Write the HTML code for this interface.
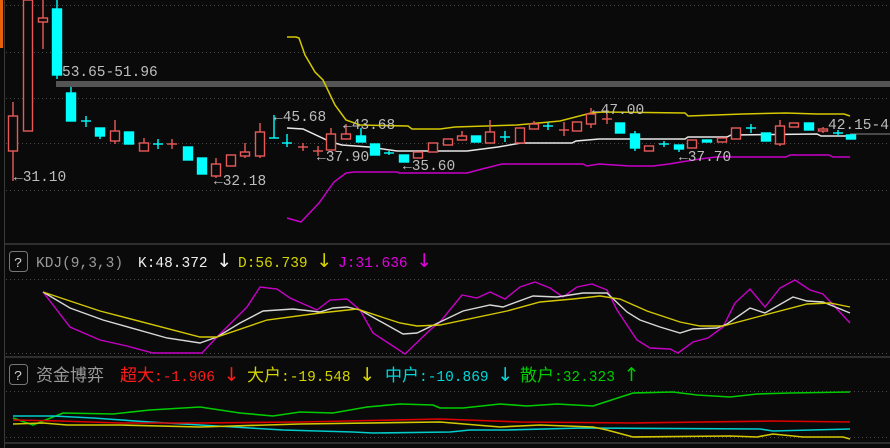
<!DOCTYPE html>
<html><head><meta charset="utf-8"><style>
html,body{margin:0;padding:0;background:#0a0a0a;}
svg{display:block}
text{font-family:"Liberation Mono","WenQuanYi Zen Hei",monospace;}
</style></head><body>
<svg width="890" height="448" viewBox="0 0 890 448" xmlns="http://www.w3.org/2000/svg">
<rect width="890" height="448" fill="#0a0a0a"/>
<rect x="0" y="0" width="3" height="48" fill="#e8600c"/>
<line x1="4.5" y1="0" x2="4.5" y2="448" stroke="#3a3a3a" stroke-width="1"/>
<g stroke="#4a4a4a" stroke-width="1" stroke-dasharray="1,3">
<line x1="6" y1="5.5" x2="890" y2="5.5"/><line x1="6" y1="52.5" x2="890" y2="52.5"/>
<line x1="6" y1="98.5" x2="890" y2="98.5"/><line x1="6" y1="143.5" x2="890" y2="143.5"/>
<line x1="6" y1="190.5" x2="890" y2="190.5"/>
<line x1="6" y1="279.5" x2="890" y2="279.5"/><line x1="6" y1="353.5" x2="890" y2="353.5"/>
<line x1="6" y1="391.5" x2="890" y2="391.5"/><line x1="6" y1="437.5" x2="890" y2="437.5"/>
</g>
<g stroke="#2e2e2e" stroke-width="2">
<line x1="5" y1="244" x2="890" y2="244"/><line x1="5" y1="357" x2="890" y2="357"/><line x1="5" y1="443" x2="890" y2="443"/>
</g>
<rect x="56" y="81" width="834" height="6" fill="#555"/>
<polyline fill="none" stroke="#d4c800" stroke-width="1.5" points="287,37 296,37 299,38 305,55 315,72 323,80 335,105 346,120 360,125 408,126 412,129 440,129 455,127 517,125 560,121 591,113 603,112 685,113 688,116 743,114 786,113 817,114 844,114 850,116"/>
<polyline fill="none" stroke="#e8e8e8" stroke-width="1.5" points="287,128 303,129 331,142 342,145 369,147 397,151 467,151 498,147 521,143 572,143 576,141 599,139 685,139 688,137 727,137 731,135 817,134 821,136 850,136"/>
<line x1="850" y1="134" x2="890" y2="134" stroke="#888" stroke-width="1"/>
<polyline fill="none" stroke="#c800c8" stroke-width="1.5" points="287,218 301,222 319,203 334,182 346,173 354,172 397,172 399,173 467,173 482,169 502,164 583,164 587,166 599,164 630,166 653,166 669,164 681,162 700,159 716,157 786,157 790,155 829,155 833,157 850,157"/>
<g stroke="#e85a5a" stroke-width="1.4" fill="#0a0a0a">
<line x1="13" y1="102" x2="13" y2="181"/><rect x="8.5" y="116" width="9" height="35"/>
<rect x="23.5" y="0" width="9" height="131"/>
<line x1="43" y1="0" x2="43" y2="49"/><rect x="38.5" y="18" width="9" height="4"/>
<line x1="115" y1="120" x2="115" y2="144"/><rect x="110.5" y="131" width="9" height="10"/>
<line x1="144" y1="138" x2="144" y2="151"/><rect x="139.5" y="143" width="9" height="8"/>
<line x1="172" y1="139" x2="172" y2="149"/><line x1="167" y1="144" x2="177" y2="144"/>
<line x1="216" y1="158" x2="216" y2="178"/><rect x="211.5" y="164" width="9" height="12"/>
<rect x="226.5" y="155" width="9" height="11"/>
<line x1="245" y1="143" x2="245" y2="158"/><rect x="240.5" y="152" width="9" height="4"/>
<line x1="260" y1="123" x2="260" y2="158"/><rect x="255.5" y="132" width="9" height="24"/>
<line x1="303" y1="143" x2="303" y2="151"/><line x1="298" y1="147" x2="308" y2="147"/>
<line x1="318" y1="146" x2="318" y2="156"/><line x1="313" y1="151" x2="323" y2="151"/>
<line x1="331" y1="128" x2="331" y2="150"/><rect x="326.5" y="134" width="9" height="16"/>
<line x1="346" y1="124" x2="346" y2="139"/><rect x="341.5" y="134" width="9" height="5"/>
<rect x="413.5" y="152" width="9" height="6"/>
<rect x="428.5" y="143" width="9" height="9"/>
<rect x="443.5" y="139" width="9" height="6"/>
<line x1="462" y1="131" x2="462" y2="140"/><rect x="457.5" y="136" width="9" height="4"/>
<line x1="490" y1="120" x2="490" y2="143"/><rect x="485.5" y="132" width="9" height="11"/>
<rect x="515.5" y="128" width="9" height="15"/>
<line x1="534" y1="121" x2="534" y2="129"/><rect x="529.5" y="124" width="9" height="5"/>
<line x1="564" y1="122" x2="564" y2="136"/><line x1="559" y1="130" x2="569" y2="130"/>
<rect x="572.5" y="122" width="9" height="9"/>
<line x1="591" y1="108" x2="591" y2="128"/><rect x="586.5" y="114" width="9" height="10"/>
<line x1="607" y1="114" x2="607" y2="124"/><line x1="602" y1="119" x2="612" y2="119"/>
<rect x="644.5" y="146" width="9" height="5"/>
<rect x="687.5" y="140" width="9" height="8"/>
<rect x="717.5" y="138" width="9" height="4"/>
<rect x="731.5" y="128" width="9" height="11"/>
<line x1="780" y1="120" x2="780" y2="146"/><rect x="775.5" y="126" width="9" height="18"/>
<rect x="789.5" y="123" width="9" height="4"/>
<line x1="823" y1="127" x2="823" y2="133"/><rect x="818.5" y="129" width="9" height="2"/>
</g>
<g stroke="#00ffff" stroke-width="1.4" fill="#00ffff">
<line x1="57" y1="0" x2="57" y2="79"/><rect x="52.5" y="9" width="9" height="66"/>
<line x1="71" y1="87" x2="71" y2="121"/><rect x="66.5" y="93" width="9" height="28"/>
<line x1="86" y1="116" x2="86" y2="127"/><line x1="81" y1="121" x2="91" y2="121"/>
<line x1="100" y1="128" x2="100" y2="139"/><rect x="95.5" y="128" width="9" height="8"/>
<rect x="124.5" y="132" width="9" height="12"/>
<line x1="158" y1="139" x2="158" y2="149"/><line x1="153" y1="144" x2="163" y2="144"/>
<rect x="183.5" y="147" width="9" height="13"/>
<rect x="197.5" y="158" width="9" height="16"/>
<line x1="274" y1="115" x2="274" y2="138"/><line x1="269" y1="138" x2="279" y2="138"/>
<line x1="287" y1="134" x2="287" y2="147"/><line x1="282" y1="143" x2="292" y2="143"/>
<line x1="361" y1="128" x2="361" y2="142"/><rect x="356.5" y="136" width="9" height="6"/>
<rect x="370.5" y="144" width="9" height="11"/>
<line x1="389" y1="151" x2="389" y2="155"/><line x1="384" y1="153" x2="394" y2="153"/>
<rect x="399.5" y="155" width="9" height="7"/>
<rect x="471.5" y="136" width="9" height="6"/>
<line x1="505" y1="131" x2="505" y2="142"/><line x1="500" y1="137" x2="510" y2="137"/>
<line x1="548" y1="122" x2="548" y2="130"/><line x1="543" y1="126" x2="553" y2="126"/>
<rect x="615.5" y="123" width="9" height="10"/>
<line x1="635" y1="131" x2="635" y2="151"/><rect x="630.5" y="134" width="9" height="14"/>
<line x1="664" y1="141" x2="664" y2="147"/><line x1="659" y1="144" x2="669" y2="144"/>
<line x1="679" y1="145" x2="679" y2="152"/><rect x="674.5" y="145" width="9" height="4"/>
<rect x="702.5" y="140" width="9" height="2"/>
<line x1="751" y1="124" x2="751" y2="133"/><line x1="746" y1="128" x2="756" y2="128"/>
<rect x="761.5" y="133" width="9" height="8"/>
<rect x="804.5" y="123" width="9" height="7"/>
<line x1="838" y1="130" x2="838" y2="136"/><line x1="833" y1="133" x2="843" y2="133"/>
<rect x="846.5" y="135" width="9" height="4"/>
</g>
<g fill="#bdbdbd" font-size="14.5">
<text x="62" y="76">53.65-51.96</text>
<text x="14" y="181">←31.10</text>
<text x="214" y="185">←32.18</text>
<text x="274" y="121">←45.68</text>
<text x="343" y="129">←43.68</text>
<text x="317" y="161">←37.90</text>
<text x="403" y="170">←35.60</text>
<text x="592" y="114">←47.00</text>
<text x="679" y="161">←37.70</text>
<text x="828" y="129">42.15-4</text>
</g>
<rect x="9.5" y="251.5" width="18" height="20" rx="3" fill="none" stroke="#777"/>
<text x="14" y="267" fill="#ccc" font-size="14">?</text>
<g font-size="14.5">
<text x="36" y="267" fill="#9a9a9a">KDJ(9,3,3)</text>
<text x="138" y="267" fill="#eee">K:48.372 <tspan font-size="19" font-family="'DejaVu Sans',sans-serif">↓</tspan></text>
<text x="238" y="267" fill="#d4d400">D:56.739 <tspan font-size="19" font-family="'DejaVu Sans',sans-serif">↓</tspan></text>
<text x="338" y="267" fill="#e000e0">J:31.636 <tspan font-size="19" font-family="'DejaVu Sans',sans-serif">↓</tspan></text>
</g>
<polyline fill="none" stroke="#c800c8" stroke-width="1.4" points="43,292 70,327 100,340 127,346 153,353 202,353 217,337 247,307 260,287 277,289 290,298 317,310 330,300 347,299 360,310 373,333 405,354 430,330 440,322 462,295 477,298 490,292 505,299 520,287 535,282 550,288 563,297 577,287 592,284 607,290 617,310 637,340 650,348 670,349 678,353 693,342 708,338 723,327 735,303 750,289 765,307 780,288 795,280 810,290 823,294 850,323"/>
<polyline fill="none" stroke="#d8d8d8" stroke-width="1.4" points="43,292 70,308 103,320 167,338 200,343 217,337 240,323 263,311 293,309 320,312 333,308 347,307 360,310 403,334 417,333 440,322 463,311 490,305 503,307 533,296 557,297 583,293 607,293 627,312 640,320 660,327 680,333 693,329 717,328 727,324 750,308 765,313 793,297 807,301 823,302 850,313"/>
<polyline fill="none" stroke="#d4c800" stroke-width="1.4" points="43,292 100,311 200,337 217,337 267,320 320,313 357,309 400,323 417,326 440,325 507,311 540,302 573,299 600,296 620,299 647,311 680,322 700,326 723,326 757,317 807,304 830,303 850,307"/>
<rect x="9.5" y="364.5" width="18" height="20" rx="3" fill="none" stroke="#777"/>
<text x="14" y="380" fill="#ccc" font-size="14">?</text>
<g font-size="14.5">
<text x="36" y="381" fill="#9a9a9a" font-family="'WenQuanYi Zen Hei',sans-serif" font-size="17">资金博弈</text>
<text x="120" y="381" fill="#ff1a1a"><tspan font-family="'WenQuanYi Zen Hei',sans-serif" font-size="17">超大</tspan>:-1.906 <tspan font-size="19" font-family="'DejaVu Sans',sans-serif">↓</tspan></text>
<text x="247" y="381" fill="#d4d400"><tspan font-family="'WenQuanYi Zen Hei',sans-serif" font-size="17">大户</tspan>:-19.548 <tspan font-size="19" font-family="'DejaVu Sans',sans-serif">↓</tspan></text>
<text x="385" y="381" fill="#00d8d8"><tspan font-family="'WenQuanYi Zen Hei',sans-serif" font-size="17">中户</tspan>:-10.869 <tspan font-size="19" font-family="'DejaVu Sans',sans-serif">↓</tspan></text>
<text x="520" y="381" fill="#00cc00"><tspan font-family="'WenQuanYi Zen Hei',sans-serif" font-size="17">散户</tspan>:32.323 <tspan font-size="19" font-family="'DejaVu Sans',sans-serif">↑</tspan></text>
</g>
<polyline fill="none" stroke="#00cc00" stroke-width="1.6" points="13,418 33,425 63,413 113,414 150,410 200,407 240,413 273,416 300,412 333,413 367,407 400,404 433,405 440,408 463,408 500,404 527,406 557,404 593,406 633,393 673,392 697,395 730,397 757,394 790,393 850,392"/>
<polyline fill="none" stroke="#00cccc" stroke-width="1.6" points="13,416 53,416 93,418 150,422 200,425 250,428 283,430 353,432 373,433 450,432 470,430 507,430 583,428 760,429 773,431 850,429"/>
<polyline fill="none" stroke="#dd0000" stroke-width="1.6" points="13,420 60,421 120,423 200,423 300,422 440,419 520,422 633,423 773,421 850,422"/>
<polyline fill="none" stroke="#d4c800" stroke-width="1.6" points="13,424 43,423 67,425 120,425 200,427 300,424 440,422 500,427 540,425 593,427 607,430 633,437 730,436 757,437 773,434 803,437 843,437 850,439"/>
</svg>
</body></html>
